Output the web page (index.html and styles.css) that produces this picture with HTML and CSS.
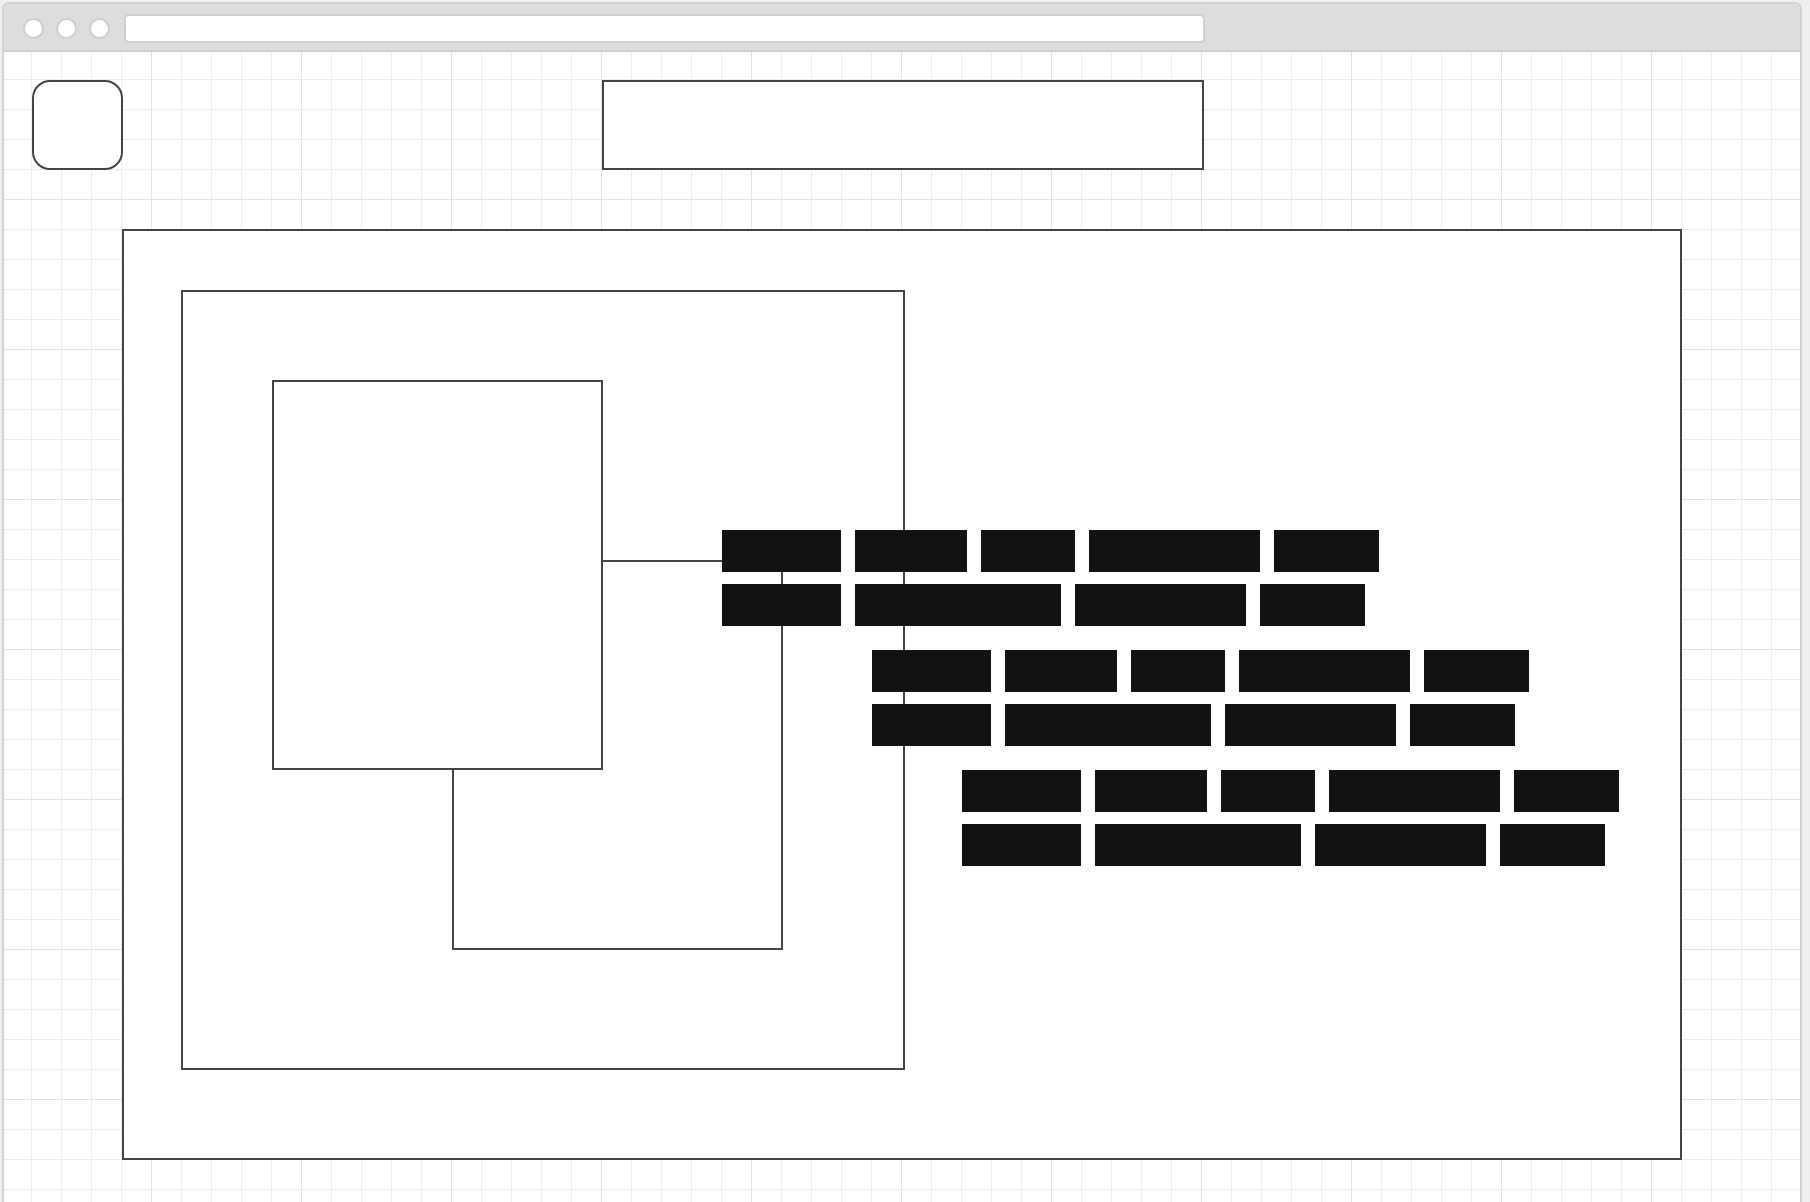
FILE: index.html
```html
<!DOCTYPE html>
<html>
<head>
<meta charset="utf-8">
<title>Wireframe</title>
<link rel="stylesheet" href="styles.css">
</head>
<body>
<div class="window">
  <div class="toolbar">
    <span class="dot"></span>
    <span class="dot"></span>
    <span class="dot"></span>
    <div class="address"></div>
  </div>
  <div class="content">
    <header class="header">
      <div class="logo"></div>
      <div class="search"></div>
    </header>
    <main class="stage">
      <div class="frame">
        <div class="card card-back"></div>
        <div class="card card-front"></div>
      </div>
      <div class="group group-1">
        <div class="row"><span class="w1"></span><span class="w2"></span><span class="w3"></span><span class="w4"></span><span class="w5"></span></div>
        <div class="row"><span class="w1"></span><span class="w6"></span><span class="w4"></span><span class="w5"></span></div>
      </div>
      <div class="group group-2">
        <div class="row"><span class="w1"></span><span class="w2"></span><span class="w3"></span><span class="w4"></span><span class="w5"></span></div>
        <div class="row"><span class="w1"></span><span class="w6"></span><span class="w4"></span><span class="w5"></span></div>
      </div>
      <div class="group group-3">
        <div class="row"><span class="w1"></span><span class="w2"></span><span class="w3"></span><span class="w4"></span><span class="w5"></span></div>
        <div class="row"><span class="w1"></span><span class="w6"></span><span class="w4"></span><span class="w5"></span></div>
      </div>
    </main>
  </div>
</div>
</body>
</html>
```
FILE: styles.css
```css
* { box-sizing: border-box; }

html, body {
  margin: 0;
  padding: 0;
  background: #efefef;
  font-family: "Liberation Sans", Arial, sans-serif;
  overflow: hidden;
}

.window {
  margin: 2px 0 0 2px;
  width: 1800px;
  height: 1220px;
  border: 2px solid #d2d2d2;
  border-bottom: none;
  border-radius: 7px 7px 0 0;
  background: #ffffff;
  overflow: hidden;
}

.toolbar {
  height: 48px;
  background: #dddddd;
  border-bottom: 2px solid #d0d0d0;
  display: flex;
  align-items: center;
  padding: 2px 0 0 18.5px;
}

.dot {
  width: 21px;
  height: 21px;
  border-radius: 50%;
  background: #ffffff;
  border: 2px solid #cfcfcf;
  margin-right: 12px;
  flex: none;
}

.dot:nth-child(3) { margin-right: 14.5px; }

.address {
  width: 1081px;
  height: 29px;
  background: #ffffff;
  border: 2px solid #cfcfcf;
  border-radius: 5px;
}

.content {
  height: 1200px;
  background-color: #ffffff;
  background-image:
    linear-gradient(to right, transparent 147px, #e2e2e2 147px, #e2e2e2 148px, transparent 148px),
    linear-gradient(to bottom, transparent 147px, #e2e2e2 147px, #e2e2e2 148px, transparent 148px),
    linear-gradient(to right, transparent 27px, #ececec 27px, #ececec 28px, transparent 28px),
    linear-gradient(to bottom, transparent 27px, #ececec 27px, #ececec 28px, transparent 28px);
  background-size: 150px 150px, 150px 150px, 30px 30px, 30px 30px;
  padding-top: 28px;
}

.header {
  display: grid;
  grid-template-columns: 1fr 602px 1fr;
  padding: 0 27px 0 29px;
  align-items: start;
}

.logo {
  width: 91px;
  height: 90px;
  margin-left: -1px;
  border: 2px solid #444444;
  border-radius: 18px;
  background: #ffffff;
}

.search {
  height: 90px;
  border: 2px solid #444444;
  background: #ffffff;
}

.stage {
  position: relative;
  width: 1560px;
  height: 931px;
  margin: 59px auto 0;
  border: 2px solid #444444;
  background: #ffffff;
  padding: 59px 0 0 57px;
}

.frame {
  position: relative;
  width: 724px;
  height: 780px;
  border: 2px solid #444444;
  background: #ffffff;
}

.card {
  position: absolute;
  width: 331px;
  height: 390px;
  border: 2px solid #444444;
  background: #ffffff;
}

.card-front { left: 89px; top: 88px; }
.card-back { left: 269px; top: 268px; }

.group {
  position: absolute;
  display: flex;
  flex-direction: column;
  gap: 12px;
}

.group-1 { left: 598px; top: 299px; }
.group-2 { left: 748px; top: 419px; }
.group-3 { left: 838px; top: 539px; }

.row {
  display: flex;
  gap: 14px;
}

.row span {
  display: block;
  height: 42px;
  background: #121212;
}

.w1 { width: 119px; }
.w2 { width: 112px; }
.w3 { width: 93.5px; }
.w4 { width: 171px; }
.w5 { width: 105px; }
.w6 { width: 206px; }
```
